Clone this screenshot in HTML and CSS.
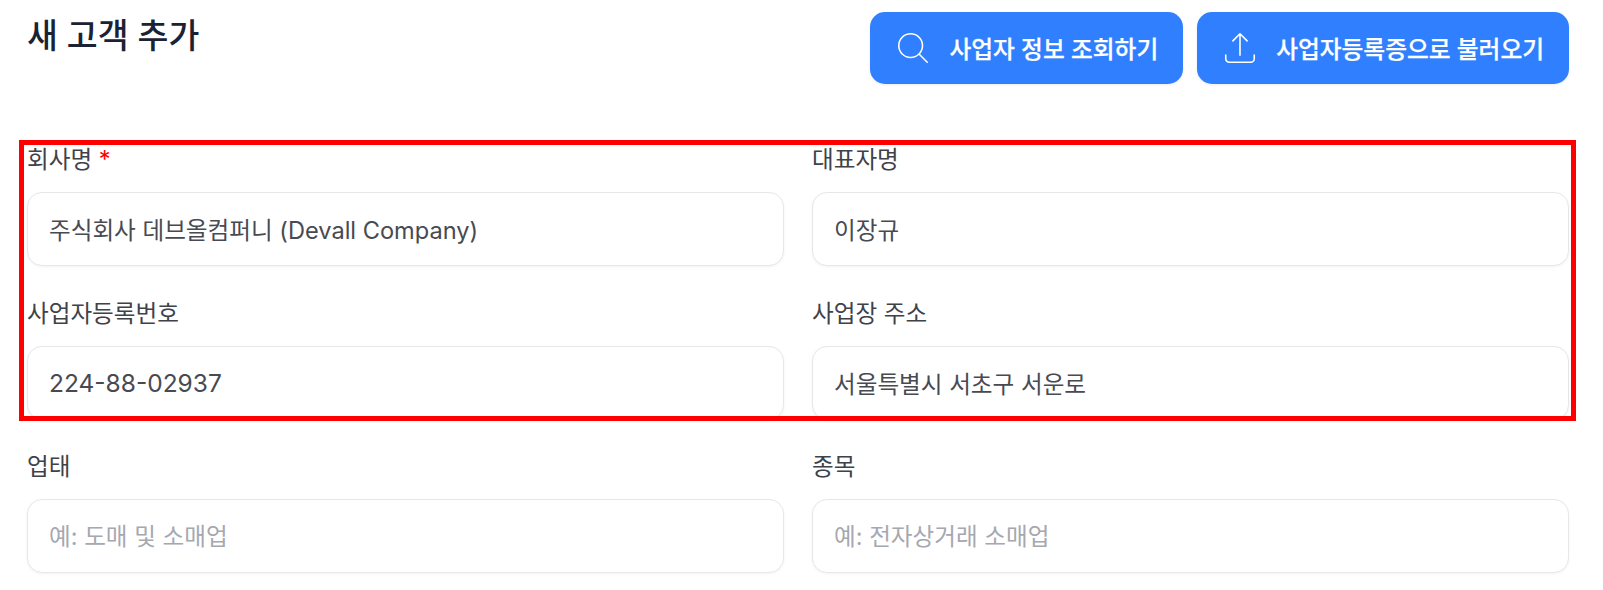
FILE: index.html
```html
<!DOCTYPE html>
<html lang="ko">
<head>
    <meta charset="UTF-8">
    <meta name="viewport" content="width=device-width, initial-scale=1.0">
    <title>새 고객 추가</title>
    <link rel="stylesheet" href="styles.css">
</head>
<body>
    <div class="page">
        <header class="page-header">
            <h1 class="page-title">새 고객 추가</h1>
            <div class="actions">
                <button class="btn btn-lookup" type="button">
                    <svg class="btn-icon" viewBox="0 0 24 24" fill="none" stroke="currentColor" stroke-width="1" stroke-linecap="round" stroke-linejoin="round">
                        <path d="m21 21-5.197-5.197m0 0A7.5 7.5 0 1 0 5.196 5.196a7.5 7.5 0 0 0 10.607 10.607Z"/>
                    </svg>
                    사업자 정보 조회하기
                </button>
                <button class="btn btn-upload" type="button">
                    <svg class="btn-icon" viewBox="0 0 24 24" fill="none" stroke="currentColor" stroke-width="1" stroke-linecap="round" stroke-linejoin="round">
                        <path d="M3 16.5v2.25A2.25 2.25 0 0 0 5.25 21h13.5A2.25 2.25 0 0 0 21 18.75V16.5m-13.5-9L12 3m0 0 4.5 4.5M12 3v13.5"/>
                    </svg>
                    사업자등록증으로 불러오기
                </button>
            </div>
        </header>

        <form class="form-grid">
            <div class="field">
                <label class="field-label">회사명 <span class="required">*</span></label>
                <input class="field-input" type="text" value="주식회사 데브올컴퍼니 (Devall Company)">
            </div>
            <div class="field">
                <label class="field-label">대표자명</label>
                <input class="field-input" type="text" value="이장규">
            </div>
            <div class="field">
                <label class="field-label">사업자등록번호</label>
                <input class="field-input field-input-number" type="text" value="224-88-02937">
            </div>
            <div class="field">
                <label class="field-label">사업장 주소</label>
                <input class="field-input" type="text" value="서울특별시 서초구 서운로">
            </div>
            <div class="field">
                <label class="field-label">업태</label>
                <input class="field-input" type="text" placeholder="예: 도매 및 소매업">
            </div>
            <div class="field">
                <label class="field-label">종목</label>
                <input class="field-input" type="text" placeholder="예: 전자상거래 소매업">
            </div>
        </form>

        <div class="highlight-box"></div>
    </div>
</body>
</html>
```
FILE: styles.css
```css
html, body {
    margin: 0;
    height: 100%;
    background: #fff;
    overflow: hidden;
}
body {
    font-family: Inter, "Noto Sans CJK KR", sans-serif;
}
.page {
    position: relative;
    box-sizing: border-box;
    height: 590px;
    padding: 12px 34px 0 27px;
}
.page-header {
    display: flex;
    justify-content: space-between;
    align-items: flex-start;
}
.page-title {
    margin: 0;
    padding-top: 2px;
    font-size: 33.6px;
    line-height: 44px;
    font-weight: 500;
    color: #1a2233;
}
.actions {
    display: flex;
    gap: 14px;
}
.btn {
    display: flex;
    align-items: center;
    gap: 17px;
    height: 72px;
    padding: 0 25px 0 24px;
    border: 0;
    border-radius: 15px;
    background: #2f7fff;
    color: #fff;
    font-family: inherit;
    font-size: 23.7px;
    font-weight: 500;
    -webkit-text-stroke: 0.25px #fff;
    white-space: nowrap;
    box-shadow: 0 1px 3px rgba(0, 0, 0, 0.08);
}
.btn-icon {
    width: 38px;
    height: 38px;
    flex: none;
}
.form-grid {
    display: grid;
    grid-template-columns: 1fr 1fr;
    column-gap: 28px;
    row-gap: 29.5px;
    margin-top: 58px;
}
.field {
    display: flex;
    flex-direction: column;
    gap: 14px;
}
.field-label {
    font-size: 23.6px;
    line-height: 36px;
    font-weight: 400;
    color: #3f4249;
}
.required {
    color: #f00;
}
.field-input {
    box-sizing: border-box;
    width: 100%;
    height: 74px;
    padding: 0 21px;
    border: 1px solid #e5e7eb;
    border-radius: 15px;
    background: #fff;
    color: #484a52;
    font-family: inherit;
    font-size: 23.6px;
    box-shadow: 0 1px 3px rgba(0, 0, 0, 0.05);
    outline: none;
}
.field-input-number {
    font-size: 24.5px;
}
.field-input::placeholder {
    color: #a6a8b0;
    opacity: 1;
}
.highlight-box {
    position: absolute;
    left: 19px;
    top: 140px;
    width: 1557px;
    height: 281px;
    box-sizing: border-box;
    border: 5px solid #f00;
    pointer-events: none;
}
```
